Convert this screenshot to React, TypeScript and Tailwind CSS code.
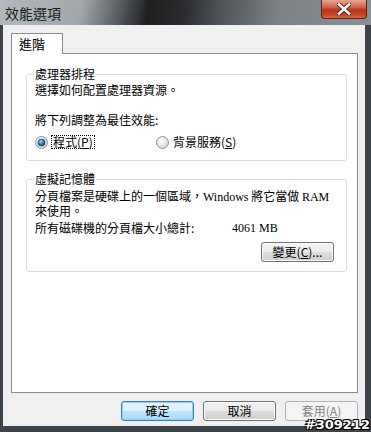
import React from "react";

const cjk = { fontFamily: '"Noto Sans CJK TC", "Noto Sans", sans-serif' };
const latin = { fontFamily: '"Liberation Serif", "Noto Sans CJK TC", serif' };

const Radio = ({ checked }: { checked?: boolean }) => (
  <svg width="13" height="13" viewBox="0 0 13 13" className="shrink-0">
    <defs>
      <radialGradient id="rbg" cx="40%" cy="35%" r="70%">
        <stop offset="0%" stopColor="#ffffff" />
        <stop offset="100%" stopColor="#cfd1d3" />
      </radialGradient>
      <radialGradient id="rdot" cx="40%" cy="35%" r="70%">
        <stop offset="0%" stopColor="#9fd6f5" />
        <stop offset="60%" stopColor="#2c79b5" />
        <stop offset="100%" stopColor="#134a76" />
      </radialGradient>
    </defs>
    <circle cx="6.5" cy="6.5" r="6" fill="url(#rbg)" stroke="#8f9295" />
    {checked && (
      <>
        <circle cx="6.5" cy="6.5" r="3.8" fill="#1d3f5c" />
        <circle cx="6.5" cy="6.5" r="3.2" fill="url(#rdot)" />
      </>
    )}
  </svg>
);

const Btn = ({
  children,
  kind,
}: {
  children: React.ReactNode;
  kind?: "default" | "disabled";
}) => {
  if (kind === "default")
    return (
      <div className="w-[73px] h-[20px] rounded-[3px] border border-[#3c7fb1] shadow-[inset_0_0_0_1px_#8fd0f3] bg-[linear-gradient(#eaf6fd_0%,#d9f0fc_50%,#bee6fd_51%,#a7d9f5_100%)] flex items-center justify-center text-[12px] text-black leading-none">
        {children}
      </div>
    );
  if (kind === "disabled")
    return (
      <div className="w-[73px] h-[20px] rounded-[3px] border border-[#adb2b5] bg-[#f4f4f4] flex items-center justify-center text-[12px] text-[#838383] leading-none">
        {children}
      </div>
    );
  return (
    <div className="w-[73px] h-[20px] rounded-[3px] border border-[#707070] shadow-[inset_0_0_0_1px_#fcfcfc] bg-[linear-gradient(#f2f2f2_0%,#ebebeb_50%,#dddddd_51%,#cfcfcf_100%)] flex items-center justify-center text-[12px] text-black leading-none">
      {children}
    </div>
  );
};

export default function App() {
  return (
    <div
      className="relative w-[371px] h-[432px] flex flex-col bg-[#3d434a] overflow-hidden"
      style={cjk}
    >
      {/* title bar */}
      <div className="h-[25px] shrink-0 flex items-start bg-[linear-gradient(100deg,#b4b9be_0%,#a2a7ac_22%,#5a5e62_32%,#1e1f21_40%,#2b2d30_50%,#4b4f53_58%,#7d8287_75%,#8a8f94_100%)]">
        <span className="ml-[5px] mt-[4px] text-[14px] leading-[18px] text-[#1a1a1a]">
          效能選項
        </span>
        <div className="ml-auto mr-[4px] w-[46px] h-[19px] rounded-b-[4px] border border-t-0 border-[#5a2218] bg-[linear-gradient(#e8a493_0%,#d0634a_40%,#b73418_55%,#c74a2a_85%,#d96a44_100%)] flex items-center justify-center">
          <svg width="14" height="12" viewBox="0 0 14 12">
            <path d="M2 1.5 L12 10.5 M12 1.5 L2 10.5" stroke="#4a1a10" strokeWidth="4.2" strokeLinecap="square" />
            <path d="M2 1.5 L12 10.5 M12 1.5 L2 10.5" stroke="#ffffff" strokeWidth="2.6" strokeLinecap="square" />
          </svg>
        </div>
      </div>

      {/* body with frame */}
      <div className="flex-1 flex pl-[3px] pr-[6px] pb-[6px]">
        <div className="flex-1 flex flex-col bg-[#f0f0f0] pl-[8px] pr-[7px] pt-[8px]">
          {/* tab */}
          <div className="h-[20px] flex">
            <div className="w-[52px] h-[21px] bg-white border border-b-0 border-[#898c95] relative z-10 pl-[7px] text-[13px] leading-[20px] text-black">
              進階
            </div>
          </div>

          {/* tab panel */}
          <div className="h-[340px] bg-white border border-[#898c95] flex flex-col text-[12px] text-black">
            {/* group 1 */}
            <fieldset className="ml-[14px] mt-[13px] w-[321px] border border-[#d5dfe5] rounded-[3px] px-[8px] pb-[11px]">
              <legend className="px-[1px] -ml-[1px] leading-[14px]">處理器排程</legend>
              <div className="mt-[2px] leading-[14px]">選擇如何配置處理器資源。</div>
              <div className="mt-[16px] leading-[14px]">將下列調整為最佳效能:</div>
              <div className="mt-[8px] h-[14px] flex items-center">
                <div className="w-[121px] flex items-center">
                  <Radio checked />
                  <span className="ml-[3px] leading-[12px] border border-dotted border-black px-[1px]">
                    程式(<span className="underline">P</span>)
                  </span>
                </div>
                <div className="flex items-center">
                  <Radio />
                  <span className="ml-[4px] leading-[14px]">
                    背景服務(<span className="underline">S</span>)
                  </span>
                </div>
              </div>
            </fieldset>

            {/* group 2 */}
            <fieldset className="ml-[14px] mt-[11px] w-[321px] border border-[#d5dfe5] rounded-[3px] pl-[8px] pr-[12px] pb-[9px]">
              <legend className="px-[1px] -ml-[1px] leading-[14px]">虛擬記憶體</legend>
              <div className="mt-[3px] leading-[13px]">
                分頁檔案是硬碟上的一個區域，<span style={latin}>Windows</span> 將它當做{" "}
                <span style={latin}>RAM</span>
                <br />
                來使用。
              </div>
              <div className="mt-[4px] flex leading-[14px]">
                <span className="w-[197px]">所有磁碟機的分頁檔大小總計:</span>
                <span style={latin}>4061 MB</span>
              </div>
              <div className="mt-[7px] flex justify-end">
                <Btn>
                  變更(<span className="underline">C</span>)...
                </Btn>
              </div>
            </fieldset>
          </div>

          {/* dialog buttons */}
          <div className="mt-[8px] flex justify-end gap-[9px]">
            <Btn kind="default">確定</Btn>
            <Btn>取消</Btn>
            <Btn kind="disabled">
              套用(<span className="underline">A</span>)
            </Btn>
          </div>
        </div>
      </div>

      {/* watermark */}
      <div
        className="absolute right-[1px] bottom-[1px] text-[13px] font-bold text-white leading-[13px] [text-shadow:1px_1px_0_#000,-1px_-1px_0_#000,1px_-1px_0_#000,-1px_1px_0_#000]"
        style={{ fontFamily: '"DejaVu Sans", sans-serif' }}
      >
        #309212
      </div>
    </div>
  );
}
